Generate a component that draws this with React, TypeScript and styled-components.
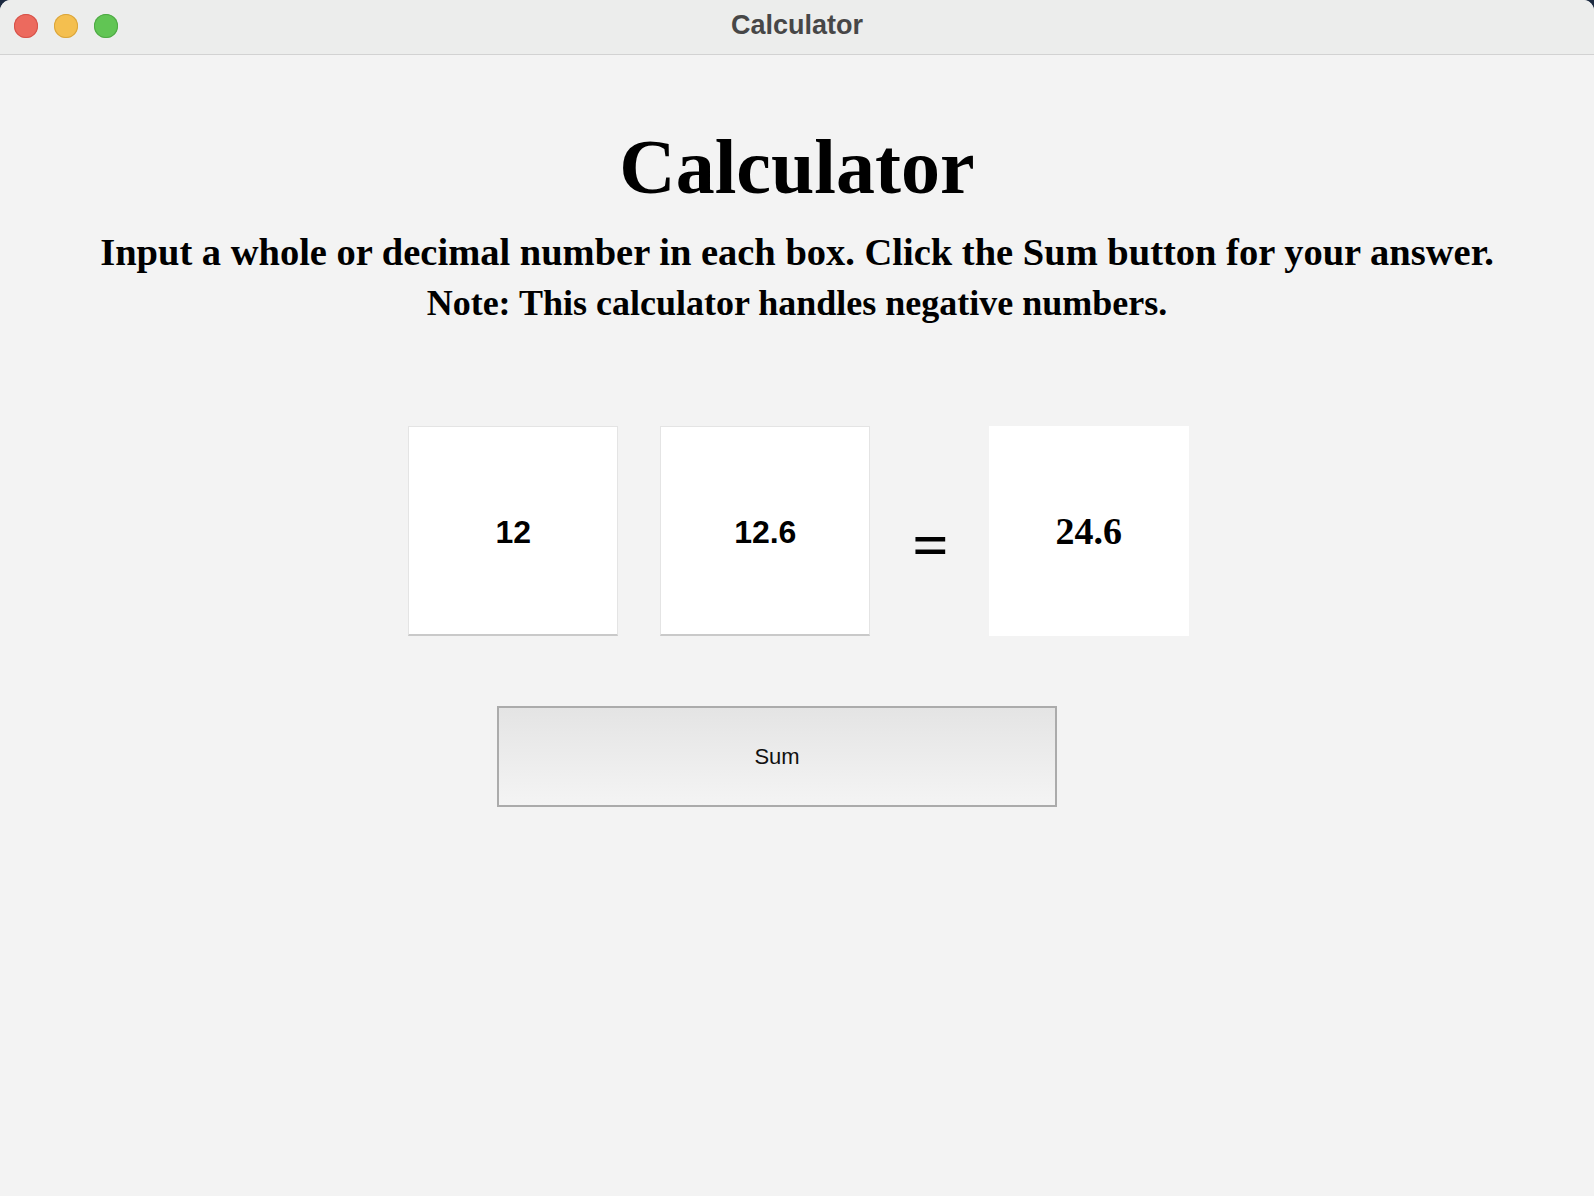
import React from "react";
import styled, { createGlobalStyle } from "styled-components";

const Global = createGlobalStyle`
  html, body { margin: 0; padding: 0; background: #1c2a40; }
  body { width: 1594px; height: 1196px; overflow: hidden; }
`;

const Window = styled.div`
  width: 1594px;
  height: 1196px;
  display: flex;
  flex-direction: column;
  background: #f3f3f3;
  border-radius: 11px 11px 0 0;
  overflow: hidden;
`;

const TitleBar = styled.div`
  height: 55px;
  flex: none;
  display: flex;
  align-items: center;
  position: relative;
  background: #ecedec;
  border-bottom: 1px solid #d2d2d2;
  box-sizing: border-box;
`;

const Lights = styled.div`
  display: flex;
  gap: 16px;
  padding-left: 14px;
  margin-top: -2px;
`;

const Light = styled.span<{ $c: string; $b: string }>`
  width: 24px;
  height: 24px;
  border-radius: 50%;
  background: ${(p) => p.$c};
  box-shadow: inset 0 0 0 1px ${(p) => p.$b};
`;

const WindowTitle = styled.div`
  position: absolute;
  left: 0;
  right: 0;
  top: 0;
  height: 50px;
  display: flex;
  align-items: center;
  justify-content: center;
  font-family: "Liberation Sans", Arial, sans-serif;
  font-weight: 700;
  font-size: 27px;
  color: #474747;
  pointer-events: none;
`;

const Content = styled.main`
  flex: 1;
  display: flex;
  flex-direction: column;
  align-items: center;
  font-family: "Liberation Serif", "Times New Roman", serif;
  color: #000;
`;

const Heading = styled.h1`
  margin: 67px 0 0;
  font-size: 78px;
  line-height: 90px;
  font-weight: 700;
`;

const Sub = styled.p<{ $size: number; $top?: number }>`
  margin: ${(p) => p.$top ?? 0}px 0 0;
  font-size: ${(p) => p.$size}px;
  line-height: 51px;
  font-weight: 700;
  text-align: center;
  white-space: nowrap;
`;

const Row = styled.div`
  display: flex;
  align-items: center;
  margin: 97px 0 0 3px;
`;

const NumberBox = styled.input`
  width: 210px;
  height: 210px;
  box-sizing: border-box;
  margin: 0;
  padding: 3px 0 0;
  border: 1px solid #e4e4e4;
  border-bottom: 2px solid #c9c9c9;
  background: #fff;
  text-align: center;
  font-family: "Liberation Sans", Arial, sans-serif;
  font-weight: 700;
  font-size: 32px;
  color: #000;
  outline: none;
  & + & { margin-left: 42px; }
`;

const Equals = styled.div`
  margin: 30px 40px 0 42px;
  font-family: "Liberation Serif", "Times New Roman", serif;
  font-weight: 700;
  font-size: 64px;
  line-height: 1;
`;

const Result = styled.output`
  width: 200px;
  height: 210px;
  background: #fff;
  display: flex;
  align-items: center;
  justify-content: center;
  font-family: "Liberation Serif", "Times New Roman", serif;
  font-weight: 700;
  font-size: 38px;
  padding-bottom: 1px;
  box-sizing: border-box;
`;

const SumButton = styled.button`
  margin: 70px 40px 0 0;
  width: 560px;
  height: 101px;
  box-sizing: border-box;
  border: 2px solid #ababab;
  background: linear-gradient(#e4e4e4, #f4f4f4);
  font-family: "Liberation Sans", Arial, sans-serif;
  font-size: 22px;
  color: #111;
  cursor: pointer;
`;

export default function App() {
  return (
    <>
      <Global />
      <Window>
        <TitleBar>
          <Lights>
            <Light $c="#ec6a5e" $b="#d5534a" />
            <Light $c="#f4bf4f" $b="#d9a53c" />
            <Light $c="#61c554" $b="#4fa845" />
          </Lights>
          <WindowTitle>Calculator</WindowTitle>
        </TitleBar>
        <Content>
          <Heading>Calculator</Heading>
          <Sub $size={38.5} $top={15}>
            Input a whole or decimal number in each box. Click the Sum button for your answer.
          </Sub>
          <Sub $size={36}>Note: This calculator handles negative numbers.</Sub>
          <Row>
            <NumberBox defaultValue="12" />
            <NumberBox defaultValue="12.6" />
            <Equals>=</Equals>
            <Result>24.6</Result>
          </Row>
          <SumButton>Sum</SumButton>
        </Content>
      </Window>
    </>
  );
}
